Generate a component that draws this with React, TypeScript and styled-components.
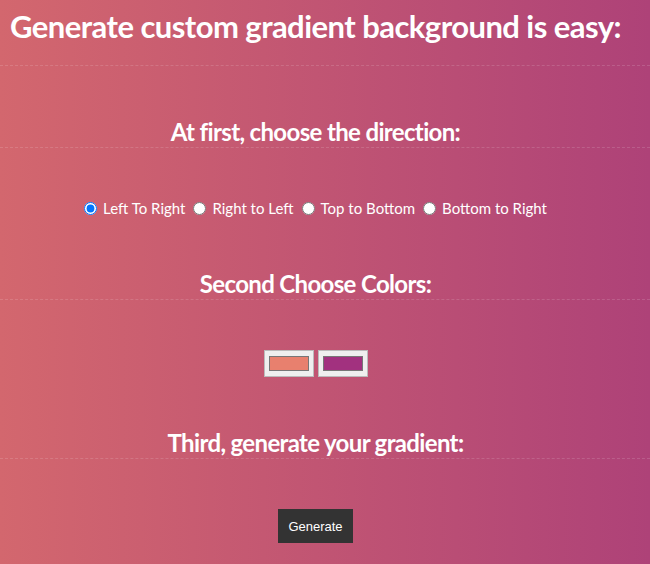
import styled, { createGlobalStyle } from "styled-components";
import { useState } from "react";

const GlobalStyle = createGlobalStyle`
  html, body {
    margin: 0;
    padding: 0;
  }
  body {
    font-family: Lato, "Open Sans", sans-serif;
  }
`;

const Page = styled.div`
  min-height: 564px;
  box-sizing: border-box;
  padding: 7px 19px 20px 0;
  background: linear-gradient(to right, #d3676e, #ae4278);
  color: #ffffff;
  text-align: center;
`;

const Title = styled.h1`
  margin: 0;
  font-size: 31px;
  line-height: 38px;
  font-weight: 700;
  letter-spacing: -0.55px;
`;

const Rule = styled.hr<{ $gap?: number }>`
  margin: ${(p) => p.$gap ?? 0}px 0 0 0;
  border: 0;
  border-top: 1px dashed rgba(255, 255, 255, 0.14);
  width: 650px;
  height: 0;
`;

const Heading = styled.h2`
  margin: 51px 0 0 0;
  font-size: 24px;
  line-height: 30px;
  font-weight: 700;
  letter-spacing: -0.65px;
`;

const Row = styled.div<{ $height: number }>`
  margin-top: 50px;
  height: ${(p) => p.$height}px;
  display: flex;
  justify-content: center;
  align-items: center;
`;

const Choice = styled.label`
  display: inline-flex;
  align-items: center;
  font-size: 15px;
  letter-spacing: 0;
  margin-right: 4px;
  cursor: pointer;

  input {
    margin: 0 6px 0 4px;
    width: 13px;
    height: 13px;
  }
`;

const ColorInput = styled.input`
  width: 50px;
  height: 27px;
  margin: 0 2px;
  padding: 1px 2px;
  border: 1px solid #bbbbbb;
  background: #efefef;
  box-sizing: border-box;
  cursor: pointer;
`;

const Button = styled.button`
  height: 34px;
  padding: 0 10px;
  border: 0;
  background: #333333;
  color: #ffffff;
  font-family: Arial, "Liberation Sans", sans-serif;
  font-size: 13px;
  cursor: pointer;
`;

const directions = ["Left To Right", "Right to Left", "Top to Bottom", "Bottom to Right"];

export default function App() {
  const [dir, setDir] = useState(directions[0]);
  const [from, setFrom] = useState("#e8806e");
  const [to, setTo] = useState("#a2317f");

  return (
    <Page>
      <GlobalStyle />
      <Title>Generate custom gradient background is easy:</Title>
      <Rule $gap={20} />

      <Heading>At first, choose the direction:</Heading>
      <Rule />
      <Row $height={20}>
        {directions.map((d) => (
          <Choice key={d}>
            <input
              type="radio"
              name="direction"
              checked={dir === d}
              onChange={() => setDir(d)}
            />
            {d}
          </Choice>
        ))}
      </Row>

      <Heading>Second Choose Colors:</Heading>
      <Rule />
      <Row $height={27}>
        <ColorInput type="color" value={from} onChange={(e) => setFrom(e.target.value)} />
        <ColorInput type="color" value={to} onChange={(e) => setTo(e.target.value)} />
      </Row>

      <Heading>Third, generate your gradient:</Heading>
      <Rule />
      <Row $height={34}>
        <Button>Generate</Button>
      </Row>
    </Page>
  );
}
